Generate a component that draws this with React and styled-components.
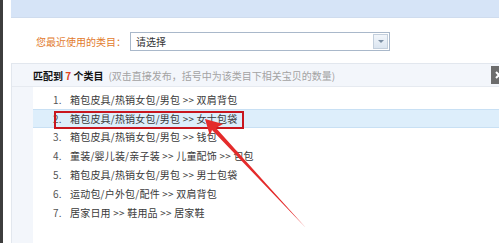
import styled, { createGlobalStyle } from "styled-components";

const GlobalStyle = createGlobalStyle`
    html, body {
        margin: 0;
        padding: 0;
        background: #ffffff;
        overflow: hidden;
    }
    body {
        font-family: "Noto Sans CJK SC", "Liberation Sans", sans-serif;
        font-size: 10px;
    }
`;

const items = [
    "箱包皮具/热销女包/男包 >> 双肩背包",
    "箱包皮具/热销女包/男包 >> 女士包袋",
    "箱包皮具/热销女包/男包 >> 钱包",
    "童装/婴儿装/亲子装 >> 儿童配饰 >> 包包",
    "箱包皮具/热销女包/男包 >> 男士包袋",
    "运动包/户外包/配件 >> 双肩背包",
    "居家日用 >> 鞋用品 >> 居家鞋",
];

export default function App() {
    return (
        <>
            <GlobalStyle />
            <Frame>
                <EdgeBar />
                <Content>
                    <TopBand />
                    <RecentRow>
                        <RecentLabel>您最近使用的类目：</RecentLabel>
                        <Select>
                            <SelectText>请选择</SelectText>
                            <SelectButton>
                                <Caret />
                            </SelectButton>
                        </Select>
                    </RecentRow>
                    <Panel>
                        <PanelHeader>
                            <HeaderText>
                                <Strong>匹配到 </Strong>
                                <Count>7</Count>
                                <Strong> 个类目</Strong>
                                <Hint>(双击直接发布，括号中为该类目下相关宝贝的数量)</Hint>
                            </HeaderText>
                            <CloseButton>
                                <svg width="8" height="8" viewBox="0 0 8 8">
                                    <path d="M1 1 L7 7 M7 1 L1 7" stroke="#fff" strokeWidth="2" />
                                </svg>
                            </CloseButton>
                        </PanelHeader>
                        <PanelBody>
                            <List>
                                {items.map((text, i) => (
                                    <Item key={i} $active={i === 1}>
                                        <Num>{i + 1}.</Num>
                                        <span>{text}</span>
                                        {i === 1 && <Marker />}
                                    </Item>
                                ))}
                            </List>
                        </PanelBody>
                    </Panel>
                </Content>
                <Arrow viewBox="0 0 499 243" width="499" height="243">
                    <path d="M205 119 L223 124 L216 128 L306 228 L212 130 L210 136 Z" fill="#e42b2b" />
                </Arrow>
            </Frame>
        </>
    );
}

const Frame = styled.div`
    position: relative;
    display: flex;
    width: 499px;
    height: 243px;
    overflow: hidden;
`;

const EdgeBar = styled.div`
    width: 3px;
    flex: none;
    background: #3d3d3d;
`;

const Content = styled.div`
    flex: 1;
    display: flex;
    flex-direction: column;
    padding-left: 8px;
    min-width: 0;
`;

const TopBand = styled.div`
    height: 17px;
    flex: none;
    background: #d6e4f7;
    border-bottom: 1px solid #cfdcee;
`;

const RecentRow = styled.div`
    display: flex;
    align-items: center;
    height: 18px;
    margin-top: 14px;
    padding-left: 25px;
`;

const RecentLabel = styled.span`
    width: 94px;
    color: #e27a2c;
    font-size: 10px;
`;

const Select = styled.div`
    display: flex;
    align-items: center;
    justify-content: space-between;
    width: 258px;
    height: 17px;
    border: 1px solid #a9b8ca;
    background: #ffffff;
`;

const SelectText = styled.span`
    padding-left: 5px;
    color: #333333;
    font-size: 10px;
`;

const SelectButton = styled.div`
    display: flex;
    align-items: center;
    justify-content: center;
    width: 15px;
    height: 15px;
    margin-right: 1px;
    border: 1px solid #c3cfdc;
    background: linear-gradient(#f2f6fb, #dbe5f0);
    box-sizing: border-box;
`;

const Caret = styled.div`
    width: 0;
    height: 0;
    border-left: 3px solid transparent;
    border-right: 3px solid transparent;
    border-top: 3px solid #7c8fa4;
`;

const Panel = styled.div`
    flex: 1;
    display: flex;
    flex-direction: column;
    margin-top: 13px;
    margin-right: -12px;
    background: #f3f6fb;
    border-top: 1px solid #e2e7ee;
    border-left: 1px solid #e2e7ee;
`;

const PanelHeader = styled.div`
    display: flex;
    align-items: center;
    justify-content: space-between;
    height: 22px;
    padding-left: 21px;
    border-bottom: 1px solid #e6eaf0;
`;

const HeaderText = styled.div`
    font-size: 10px;
    white-space: nowrap;
    padding-top: 1px;
`;

const Strong = styled.span`
    color: #111111;
    font-weight: bold;
`;

const Count = styled.span`
    color: #e2461c;
    font-weight: bold;
`;

const Hint = styled.span`
    color: #a3a3a3;
    margin-left: 5px;
`;

const CloseButton = styled.div`
    display: flex;
    align-items: center;
    justify-content: center;
    width: 16px;
    height: 18px;
    margin-right: 4px;
    background: #6d6d6d;
`;

const PanelBody = styled.div`
    flex: 1;
    padding-left: 21px;
    display: flex;
`;

const List = styled.div`
    flex: 1;
    background: #ffffff;
    padding-top: 3px;
`;

const Item = styled.div`
    position: relative;
    display: flex;
    align-items: center;
    height: ${p => (p.$active ? "16.8px" : "18.8px")};
    padding-left: 20px;
    color: #3a3a3a;
    font-size: 10px;
    letter-spacing: 0.2px;
    white-space: nowrap;
    background: ${p => (p.$active ? "#ddeefb" : "transparent")};
    border-top: ${p => (p.$active ? "1px solid #c8e0f4" : "none")};
    border-bottom: ${p => (p.$active ? "1px solid #c8e0f4" : "none")};
`;

const Num = styled.span`
    width: 17px;
    color: #555555;
`;

const Marker = styled.div`
    position: absolute;
    left: 21px;
    top: 1px;
    width: 186px;
    height: 14px;
    border: 2px solid #c8161e;
`;

const Arrow = styled.svg`
    position: absolute;
    left: 0;
    top: 0;
    pointer-events: none;
`;
